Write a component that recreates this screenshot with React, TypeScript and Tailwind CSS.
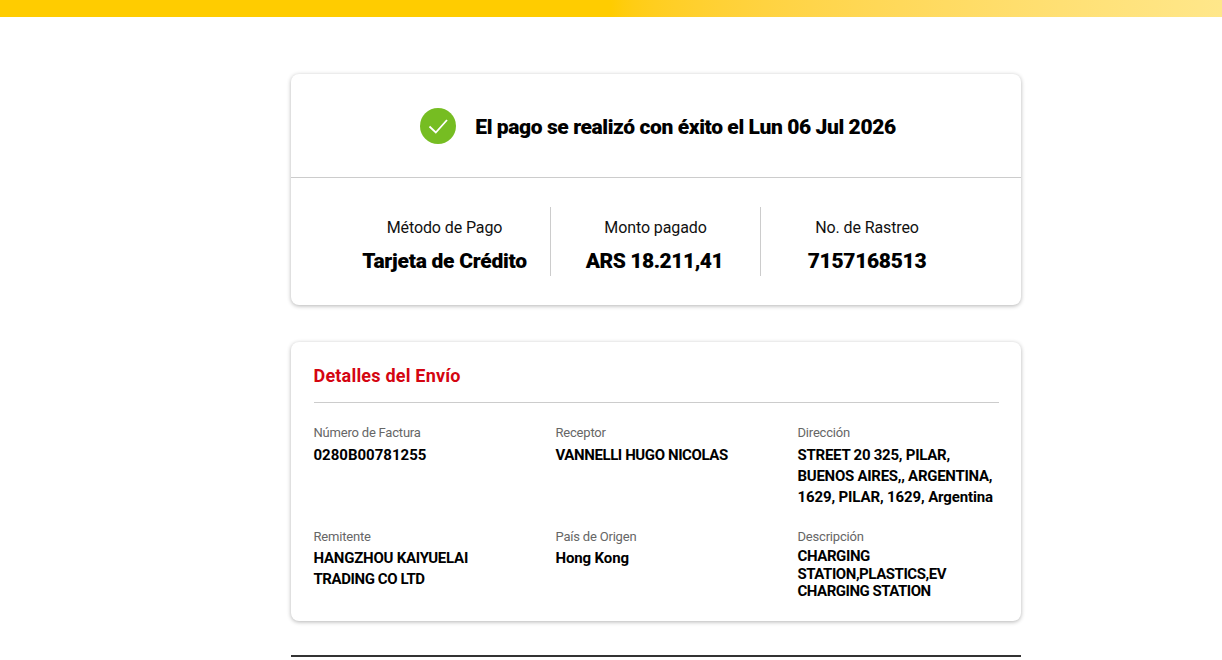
const font = { fontFamily: '"Roboto", "Liberation Sans", sans-serif' };

type Line = { text: string; track: string };

const L = (text: string, track = "tracking-[-0.3px]"): Line => ({ text, track });

function Field({ label, lines, valueCls }: { label: string; lines: Line[]; valueCls: string }) {
  return (
    <div className="w-[242px] shrink-0">
      <div className="text-[13px] leading-[16px] text-[#666666] tracking-[-0.2px] whitespace-nowrap">{label}</div>
      <div className={"text-[15px] font-bold text-black " + valueCls}>
        {lines.map((l) => (
          <div key={l.text} className={"whitespace-nowrap " + l.track}>{l.text}</div>
        ))}
      </div>
    </div>
  );
}

function Stat({ label, value, cls, track }: { label: string; value: string; cls: string; track: string }) {
  return (
    <div className={"flex flex-col items-center h-[69px] " + cls}>
      <div className="mt-[11px] text-[16px] leading-[20px] text-[#111111] tracking-[-0.1px] whitespace-nowrap">{label}</div>
      <div className={"mt-[11px] text-[21px] leading-[24px] font-black text-black whitespace-nowrap " + track}>{value}</div>
    </div>
  );
}

export default function App() {
  return (
    <div className="h-[660px] w-[1222px] overflow-hidden bg-white" style={font}>
      <div className="h-[17px] bg-gradient-to-r from-[#ffcc00] from-50% to-[#ffe78a]" />
      <div className="ml-[291px] mt-[57px] w-[730px]">
        <div className="h-[231px] rounded-[8px] bg-white shadow-[0_1px_4px_rgba(0,0,0,0.3)]">
          <div className="flex h-[104px] items-center justify-center gap-[19px] border-b border-[#cccccc] pl-[4px]">
            <svg width="36" height="36" viewBox="0 0 36 36" aria-hidden="true">
              <circle cx="18" cy="18" r="18" fill="#76bd22" />
              <path d="M9.5 18.5 L15.8 24.5 L27 12" fill="none" stroke="#ffffff" strokeWidth="1.8" />
            </svg>
            <div className="pt-[2px] text-[21px] leading-[26px] font-black text-black tracking-[-0.4px] whitespace-nowrap">
              El pago se realizó con éxito el Lun 06 Jul 2026
            </div>
          </div>
          <div className="flex pt-[29px]">
            <Stat label="Método de Pago" value="Tarjeta de Crédito" track="tracking-[-0.25px]" cls="w-[260px] border-r border-[#cccccc] pl-[48px]" />
            <Stat label="Monto pagado" value="ARS 18.211,41" track="tracking-[-0.47px] pr-[2px]" cls="w-[210px] border-r border-[#cccccc]" />
            <Stat label="No. de Rastreo" value="7157168513" track="tracking-[-0.3px]" cls="w-[212px]" />
          </div>
        </div>

        <div className="mt-[37px] h-[279px] rounded-[8px] bg-white pl-[22.5px] pr-[22px] shadow-[0_1px_4px_rgba(0,0,0,0.3)]">
          <div className="flex h-[61px] items-center border-b border-[#cccccc] pt-[13px] pb-[6px] text-[18px] font-bold text-[#d40511] tracking-[0.2px]">
            Detalles del Envío
          </div>
          <div className="flex pt-[22px]">
            <Field valueCls="mt-[4px] leading-[21px]" label="Número de Factura" lines={[L("0280B00781255", "tracking-[0px]")]} />
            <Field valueCls="mt-[4px] leading-[21px]" label="Receptor" lines={[L("VANNELLI HUGO NICOLAS", "tracking-[-0.4px]")]} />
            <Field valueCls="mt-[4px] leading-[21px]" label="Dirección" lines={[L("STREET 20 325, PILAR,", "tracking-[-0.25px]"), L("BUENOS AIRES,, ARGENTINA,", "tracking-[-0.27px]"), L("1629, PILAR, 1629, Argentina", "tracking-[-0.13px]")]} />
          </div>
          <div className="flex pt-[21px]">
            <Field valueCls="mt-[3px] leading-[21px]" label="Remitente" lines={[L("HANGZHOU KAIYUELAI", "tracking-[-0.23px]"), L("TRADING CO LTD", "tracking-[-0.42px]")]} />
            <Field valueCls="mt-[3px] leading-[21px]" label="País de Origen" lines={[L("Hong Kong", "tracking-[-0.13px]")]} />
            <Field valueCls="mt-[3px] leading-[17.5px]" label="Descripción" lines={[L("CHARGING", "tracking-[-0.4px]"), L("STATION,PLASTICS,EV", "tracking-[-0.45px]"), L("CHARGING STATION", "tracking-[-0.48px]")]} />
          </div>
        </div>

        <div className="mt-[34px] h-[2px] bg-[#333333]" />
      </div>
    </div>
  );
}
